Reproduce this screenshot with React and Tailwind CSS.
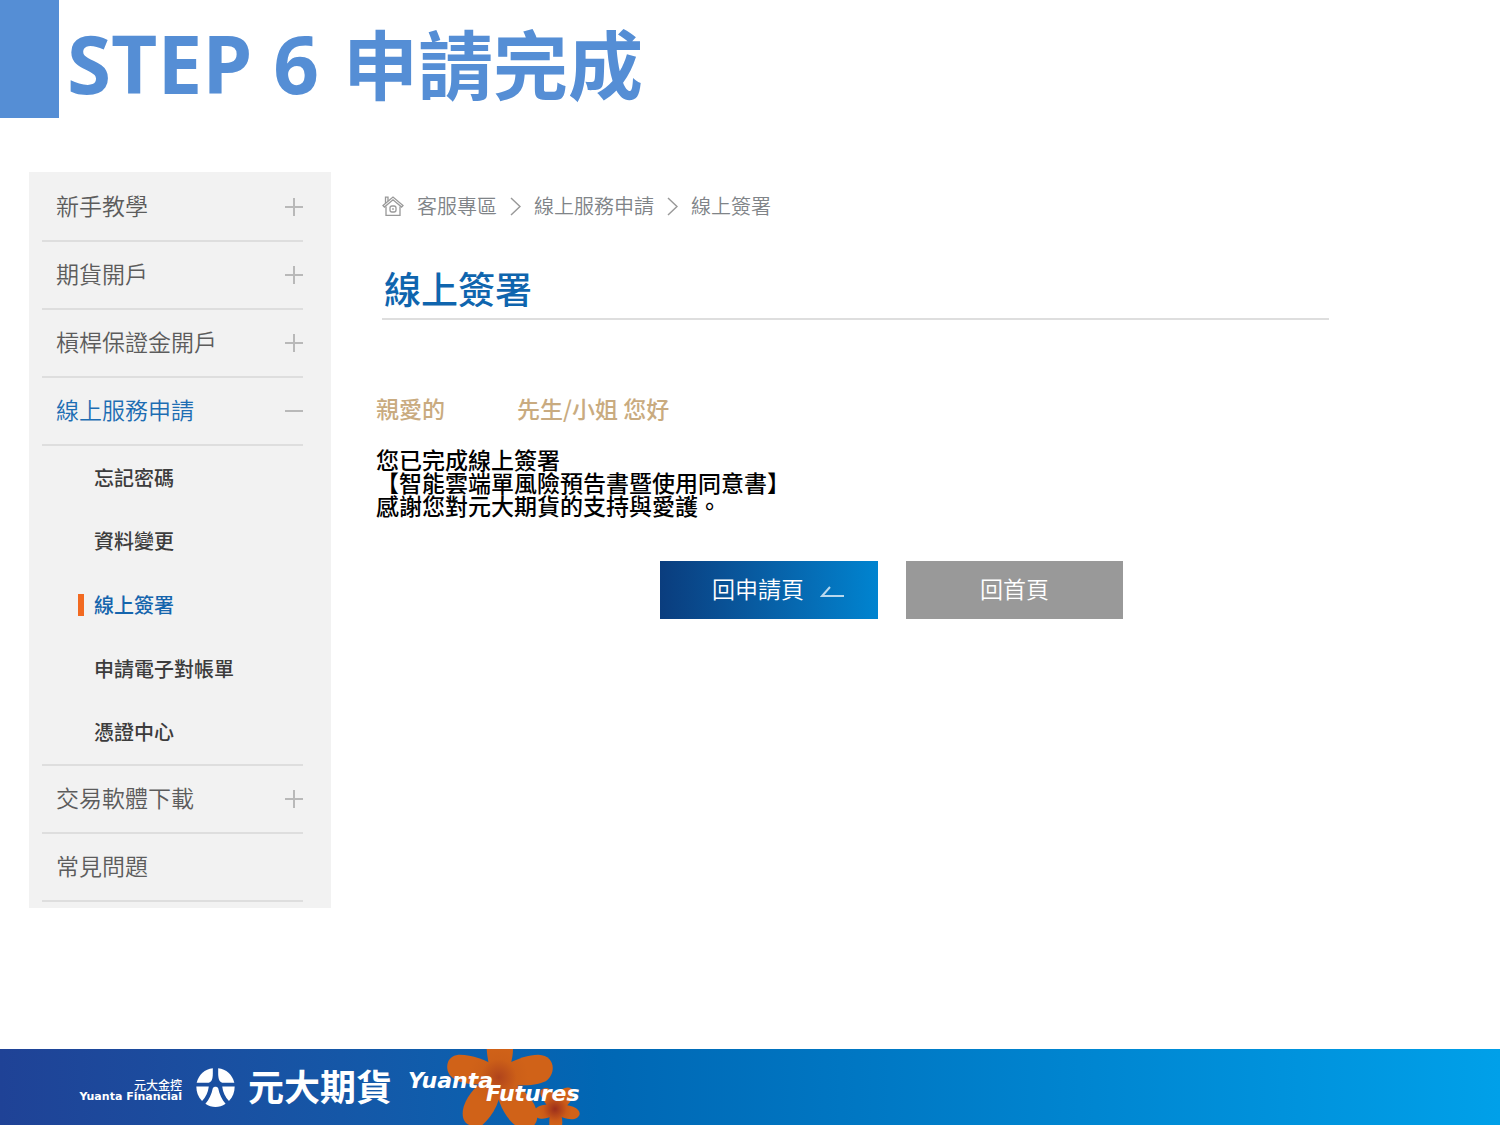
import React from "react";

function ToggleMark({ open }) {
  return (
    <svg viewBox="0 0 18 18" className="size-[18px] text-[#b9b9b9]" stroke="currentColor" strokeWidth="2" aria-hidden="true">
      <path d="M0 9H18" />
      {!open && <path d="M9 0V18" />}
    </svg>
  );
}

function MenuItem({ label, mark = true, open = false, children }) {
  return (
    <li>
      <button
        type="button"
        aria-expanded={mark ? open : undefined}
        className={`flex h-[68px] w-full items-center justify-between border-b-2 border-[#dedede] pl-[14px] text-left text-[23px] leading-[23px] font-[350] ${open ? "text-[#1d6db3]" : "text-[#5c5c5c]"}`}
      >
        <span className="pb-[3px]">{label}</span>
        {mark && <ToggleMark open={open} />}
      </button>
      {children}
    </li>
  );
}

const subItems = ["忘記密碼", "資料變更", "線上簽署", "申請電子對帳單", "憑證中心"];

function Sidebar() {
  return (
    <nav className="w-[302px] shrink-0 bg-[#f2f2f2] pt-[2px] pr-7 pb-[6px] pl-[13px]">
      <ul>
        <MenuItem label="新手教學" />
        <MenuItem label="期貨開戶" />
        <MenuItem label="槓桿保證金開戶" />
        <MenuItem label="線上服務申請" open>
          <ul className="flex h-[320px] flex-col border-b-2 border-[#dedede]">
            {subItems.map((s) => (
              <li key={s} className="flex flex-1 items-center pl-9">
                <a
                  href="#"
                  className={`flex items-center gap-[10px] text-[20px] leading-5 font-medium ${s === "線上簽署" ? "text-[#1565ad]" : "text-[#3c3c3c]"}`}
                >
                  <span className={`h-[22px] w-[6px] ${s === "線上簽署" ? "bg-[#f26a21]" : ""}`} />
                  {s}
                </a>
              </li>
            ))}
          </ul>
        </MenuItem>
        <MenuItem label="交易軟體下載" />
        <MenuItem label="常見問題" mark={false} />
      </ul>
    </nav>
  );
}

function HomeIcon() {
  return (
    <svg viewBox="0 0 22 22" className="size-[22px]" fill="none" stroke="#999" strokeWidth="1.3" aria-hidden="true">
      <path d="M1 10.5 11 2l10 8.500-1.400 1.500L11 4.800 2.400 12z" />
      <path d="M3.500 8V2.200H6V6" />
      <path d="M4 11.500V20.400H18V11.500" />
      <rect x="8" y="11" width="6" height="6" rx="2" />
      <path d="M10.500 13.500h1v1h-1z" strokeWidth="0.800" />
    </svg>
  );
}

function Chevron() {
  return (
    <svg viewBox="0 0 11 19" className="h-[19px] w-[11px]" fill="none" stroke="#999" strokeWidth="1.500" aria-hidden="true">
      <path d="M1 1l9 8.500L1 18" />
    </svg>
  );
}

function EmblemLogo() {
  return (
    <svg viewBox="0 0 116 116" className="size-[39px]" fill="#fff" aria-hidden="true">
      <path d="M50 1V18C50 32 46 42 38 44H2C8 20 26 3 50 1z" />
      <path d="M66 1V18C66 32 70 42 78 44H114C108 20 90 3 66 1z" />
      <path d="M1 55H38C36 72 29 88 18 98C6 86 1 72 1 55z" />
      <path d="M115 55H78C80 72 87 88 98 98C110 86 115 72 115 55z" />
      <path d="M50 60C53 54 63 54 66 60C70 78 77 94 88 106C69 119 47 119 28 106C39 94 46 78 50 60z" />
    </svg>
  );
}

function Flowers() {
  return (
    <svg viewBox="0 27 660 228" className="absolute top-0 left-0 h-[76px] w-[220px]" aria-hidden="true">
      <defs>
        <radialGradient id="big" gradientUnits="userSpaceOnUse" cx="326" cy="112" r="90">
          <stop offset="0" stopColor="#b0441c" />
          <stop offset="0.6" stopColor="#cc5f18" />
          <stop offset="1" stopColor="#d06218" />
        </radialGradient>
        <radialGradient id="small" gradientUnits="userSpaceOnUse" cx="495" cy="207" r="50">
          <stop offset="0" stopColor="#9c2f1c" />
          <stop offset="0.7" stopColor="#cb5a18" />
          <stop offset="1" stopColor="#d06218" />
        </radialGradient>
      </defs>
      <g fill="url(#big)">
        <path d="M298 130C302 85 292 60 290 27H369C369 60 356 85 354 130z" />
        <path d="M340 132L325 82C285 58 245 43 205 44C168 48 164 88 182 108C210 136 260 136 340 132z" />
        <path d="M310 132L335 82C365 62 410 44 445 44C496 46 500 100 467 124C430 140 385 138 310 132z" />
        <path d="M338 115H300C266 128 234 160 221 200C212 232 224 253 243 256H276C312 225 334 180 338 115z" />
        <path d="M314 115C318 180 344 232 376 256H432C448 240 444 205 424 180C404 152 380 130 352 115z" />
      </g>
      <g fill="url(#small)">
        <path d="M480 214C472 190 446 172 452 152C468 132 498 150 512 200z" />
        <path d="M480 204C490 165 520 132 545 146C562 164 535 198 509 214z" />
        <path d="M500 192C470 194 436 192 432 218C436 244 475 240 500 220z" />
        <path d="M490 192C530 194 568 198 569 222C563 246 525 240 490 220z" />
        <path d="M481 206C480 225 477 240 478 256H516C519 240 514 225 510 206z" />
      </g>
    </svg>
  );
}

export default function App() {
  return (
    <div className='flex min-h-screen flex-col bg-white font-["Noto_Sans_CJK_TC",sans-serif]'>
      <header className="flex h-[118px] items-center gap-2 text-[#558ed5]">
        <div className="h-full w-[59px] bg-[#558ed5]" />
        <h1 className="flex items-baseline gap-6 pt-[6px] font-bold">
          <span className='font-["Open_Sans",sans-serif] text-[80px] leading-[96px]'>STEP 6</span>
          <span className="text-[75px] leading-[96px]">申請完成</span>
        </h1>
      </header>

      <div className="mt-[54px] flex items-start pl-[29px]">
        <Sidebar />
        <main className="min-w-0 flex-1 pr-[171px] pl-[45px]">
          <nav className="mt-[22px] flex h-6 items-center gap-[13px] pl-[6px] text-[20px] leading-6 font-[350] text-[#808488]">
            <HomeIcon />
            <a href="#">客服專區</a>
            <Chevron />
            <a href="#">線上服務申請</a>
            <Chevron />
            <a href="#">線上簽署</a>
          </nav>
          <h2 className="mt-[46px] ml-[6px] border-b-2 border-[#dedede] pb-[6px] pl-[2px] text-[37px] leading-[48px] font-medium text-[#0f65ae]">線上簽署</h2>
          <p className="mt-[76px] flex gap-[72px] text-[23px] leading-6 font-medium text-[#c9ab80]">
            <span>親愛的</span>
            <span>先生/小姐 您好</span>
          </p>
          <p className="mt-[28px] text-[23px] leading-[23px] font-medium text-black">
            您已完成線上簽署
            <br />
            【智能雲端單風險預告書暨使用同意書】
            <br />
            感謝您對元大期貨的支持與愛護。
          </p>
          <div className="mt-[44px] flex gap-7 pl-[284px] text-[23px] leading-[23px] font-[350] text-white">
            <button type="button" className="flex h-[58px] w-[218px] items-center justify-center gap-4 bg-linear-to-r from-[#0a3d7e] to-[#0084d0] pl-[18px]">
              <span className="pb-1">回申請頁</span>
              <svg viewBox="0 0 24 12" className="mt-1 h-3 w-6" fill="none" stroke="#b9d8ee" strokeWidth="2" aria-hidden="true">
                <path d="M10 1L2 10H24" />
              </svg>
            </button>
            <button type="button" className="h-[58px] w-[217px] bg-[#999] pb-1">回首頁</button>
          </div>
        </main>
      </div>

      <footer className="mt-auto flex h-[76px] items-center overflow-hidden bg-linear-to-r from-[#1f4296] via-[#0067b4] via-40% to-[#00a0e9] pl-[76px] text-white">
        <div className="flex w-[106px] flex-col items-end pt-2">
          <span className="text-[12px] leading-[12px] font-medium">元大金控</span>
          <span className='font-["DejaVu_Sans",sans-serif] text-[11px] leading-[12px] font-bold whitespace-nowrap'>Yuanta Financial</span>
        </div>
        <div className="ml-[14px]">
          <EmblemLogo />
        </div>
        <span className="ml-[13px] w-[142px] pb-1 text-[36px] leading-10 font-bold whitespace-nowrap">元大期貨</span>
        <div className='relative h-full w-[220px] font-["DejaVu_Sans",sans-serif] text-[22px] leading-5 font-bold italic'>
          <Flowers />
          <span className="absolute top-[22px] left-[18px]">Yuanta</span>
          <span className="absolute top-[35px] left-[96px]">Futures</span>
        </div>
      </footer>
    </div>
  );
}
